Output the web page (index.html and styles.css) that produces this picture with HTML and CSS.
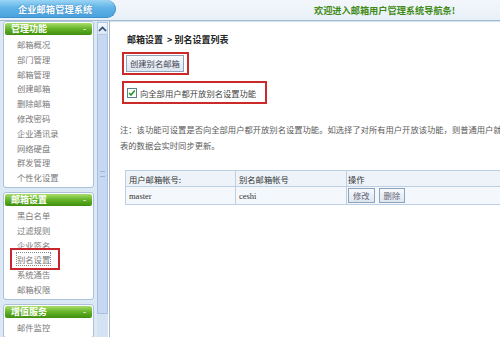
FILE: index.html
```html
<!DOCTYPE html>
<html lang="zh-CN">
<head>
  <meta charset="utf-8">
  <title>企业邮箱管理系统</title>
  <link rel="stylesheet" href="styles.css">
</head>
<body>
  <header class="topbar">
    <div class="brand">企业邮箱管理系统</div>
    <div class="welcome">欢迎进入邮箱用户管理系统导航条!</div>
  </header>

  <div class="layout">
    <aside class="sidebar">
      <section class="panel">
        <h3 class="panel-title">管理功能<span class="toggle">-</span></h3>
        <ul class="menu">
          <li>邮箱概况</li>
          <li>部门管理</li>
          <li>邮箱管理</li>
          <li>创建邮箱</li>
          <li>删除邮箱</li>
          <li>修改密码</li>
          <li>企业通讯录</li>
          <li>网络硬盘</li>
          <li>群发管理</li>
          <li>个性化设置</li>
        </ul>
      </section>
      <section class="panel">
        <h3 class="panel-title">邮箱设置<span class="toggle">-</span></h3>
        <ul class="menu">
          <li>黑白名单</li>
          <li>过滤规则</li>
          <li>企业签名</li>
          <li><span class="current">别名设置</span></li>
          <li>系统通告</li>
          <li>邮箱权限</li>
        </ul>
      </section>
      <section class="panel">
        <h3 class="panel-title">增值服务<span class="toggle">-</span></h3>
        <ul class="menu">
          <li>邮件监控</li>
        </ul>
      </section>
    </aside>

    <div class="scrollbar">
      <div class="scroll-up">
        <svg width="9" height="6" viewBox="0 0 9 6"><polyline points="1,5 4.5,1.5 8,5" fill="none" stroke="#2d4a6e" stroke-width="1.6"/></svg>
      </div>
      <div class="scroll-thumb"><span class="grip"></span></div>
    </div>

    <main class="content">
      <div class="crumb">邮箱设置 &nbsp;&gt; 别名设置列表</div>

      <div class="mark">
        <button class="btn">创建别名邮箱</button>
      </div>

      <div class="mark mark-check">
        <svg class="check" width="10" height="10" viewBox="0 0 10 10">
          <rect x="0.5" y="0.5" width="9" height="9" fill="#fbfdfb" stroke="#5f7f8f"/>
          <polyline points="2.2,5 4,7 7.8,2.6" fill="none" stroke="#1f9a1f" stroke-width="1.6"/>
        </svg>
        <span>向全部用户都开放别名设置功能</span>
      </div>

      <p class="note">
        <span>注：该功能可设置是否向全部用户都开放别名设置功能。如选择了对所有用户开放该功能，则普通用户就</span>
        <span>表的数据会实时同步更新。</span>
      </p>

      <table class="list">
        <tr class="head">
          <td class="c1">用户邮箱帐号:</td>
          <td class="c2">别名邮箱帐号</td>
          <td>操作</td>
        </tr>
        <tr>
          <td class="latin">master</td>
          <td class="latin">ceshi</td>
          <td><button class="btn btn-sm">修改</button><button class="btn btn-sm">删除</button></td>
        </tr>
      </table>
    </main>
  </div>
</body>
</html>
```

FILE: styles.css
```css
body {
  margin: 0;
  width: 500px;
  height: 337px;
  overflow: hidden;
  background: #fff;
  font-family: "Noto Sans CJK SC", "Noto Sans", sans-serif;
  font-size: 8.3px;
  color: #333;
}

ul {
  list-style: none;
  margin: 0;
  padding: 0;
}

/* top bar */

.topbar {
  display: flex;
  height: 20px;
  background: linear-gradient(#f3f7fb, #e8f0f8);
  border-bottom: 1px solid #a4bad2;
  box-shadow: 0 1px 0 #d5e2ef;
}

.brand {
  width: 116px;
  height: 18px;
  line-height: 18px;
  box-sizing: border-box;
  padding-left: 18px;
  border: 1px solid #3e8fcc;
  border-left: 0;
  border-top: 0;
  border-radius: 0 10px 10px 0;
  background: linear-gradient(#9ad5f5, #62b4e8 45%, #4aa2dd);
  color: #fff;
  font-weight: bold;
  font-size: 9.2px;
  letter-spacing: 0.1px;
  text-shadow: 0 0 2px #2f7fbf;
}

.welcome {
  margin-left: 198px;
  line-height: 20px;
  color: #3f8a14;
  font-weight: bold;
  font-size: 9.2px;
}

/* body layout */

.layout {
  display: grid;
  grid-template-columns: 97px 11px 1fr;
  height: 316px;
}

.sidebar {
  background: #dde8f5;
}

.panel {
  margin: 0 3px 4px 3px;
  padding: 1px;
  background: #fff;
  border: 1px solid #a9c1d9;
  border-radius: 3px;
}

.panel-title {
  display: flex;
  justify-content: space-between;
  margin: 0;
  height: 12px;
  line-height: 12px;
  padding: 0 6px 0 6px;
  border-radius: 2px;
  background: linear-gradient(#a8de6a, #63b226 50%, #3f8e0f);
  color: #fff;
  font-size: 9px;
  font-weight: bold;
}

.toggle {
  font-weight: normal;
}

.menu {
  padding: 2px 0 1px 12px;
}

.menu li {
  line-height: 14.8px;
  color: #7a7a7a;
}

.current {
  position: relative;
  outline: 1px dotted #8a8a8a;
}

.current::after {
  content: "";
  position: absolute;
  left: -7px;
  right: -10px;
  top: -5px;
  bottom: -5px;
  border: 2px solid #c8262c;
}

/* fake scrollbar */

.scrollbar {
  display: flex;
  flex-direction: column;
  background: #d4e2f3;
}

.scroll-up {
  height: 11px;
  margin-top: 1px;
  display: flex;
  align-items: center;
  justify-content: center;
  background: linear-gradient(#f4f8fd, #dbe7f6);
  border: 1px solid #b3c8e2;
}

.scroll-thumb {
  height: 278px;
  display: flex;
  align-items: center;
  justify-content: center;
  background: #c6d8f1;
  border: 1px solid #a9c0e0;
  border-top: 0;
}

.grip {
  width: 5px;
  height: 4px;
  border-top: 1px solid #9cb4d6;
  border-bottom: 1px solid #9cb4d6;
}

/* main content */

.content {
  margin-left: 1px;
  border-left: 1px solid #a6b9cc;
  display: flex;
  flex-direction: column;
  align-items: flex-start;
}

.crumb {
  margin: 14px 0 0 17px;
  line-height: 10px;
  font-size: 9px;
  font-weight: bold;
  color: #222;
}

.mark {
  margin: 7px 0 0 12px;
  padding: 1px 3px 1px 2px;
  border: 2px solid #cc2a2a;
}

.mark-check {
  margin-top: 6px;
  width: 138px;
  height: 19px;
  padding: 0 0 0 3px;
  display: flex;
  align-items: center;
  gap: 3px;
  color: #444;
}

.btn {
  display: block;
  height: 17px;
  margin: 0;
  padding: 0 3px;
  border: 1px solid #8ea4bc;
  background: linear-gradient(#f7f9fc, #dde6ef);
  font-family: inherit;
  font-size: 8.3px;
  color: #445;
  line-height: 15px;
}

.note {
  margin: 17px 0 0 10px;
  line-height: 16px;
  color: #5a5a5a;
}

.note span {
  display: block;
  white-space: nowrap;
}

.list {
  margin: 17px 0 0 15px;
  width: 430px;
  border-collapse: collapse;
  border: 1px solid #b6cadf;
}

.list td {
  padding: 0 3px;
  border: 1px solid #bdd0e3;
  background: #f4f8fc;
  color: #333;
  height: 17px;
  white-space: nowrap;
}

.list .head td {
  height: 15px;
  background: #edf3f9;
}

.list .c1 {
  width: 103px;
}

.list .c2 {
  width: 104px;
}

.latin {
  font-family: "Liberation Serif", serif;
  font-size: 8.5px;
}

.list td:last-child {
  padding-left: 1px;
}

.btn-sm {
  display: inline-block;
  height: 15px;
  line-height: 13px;
  padding: 0 4px;
  margin-right: 4px;
  color: #667;
}
```
